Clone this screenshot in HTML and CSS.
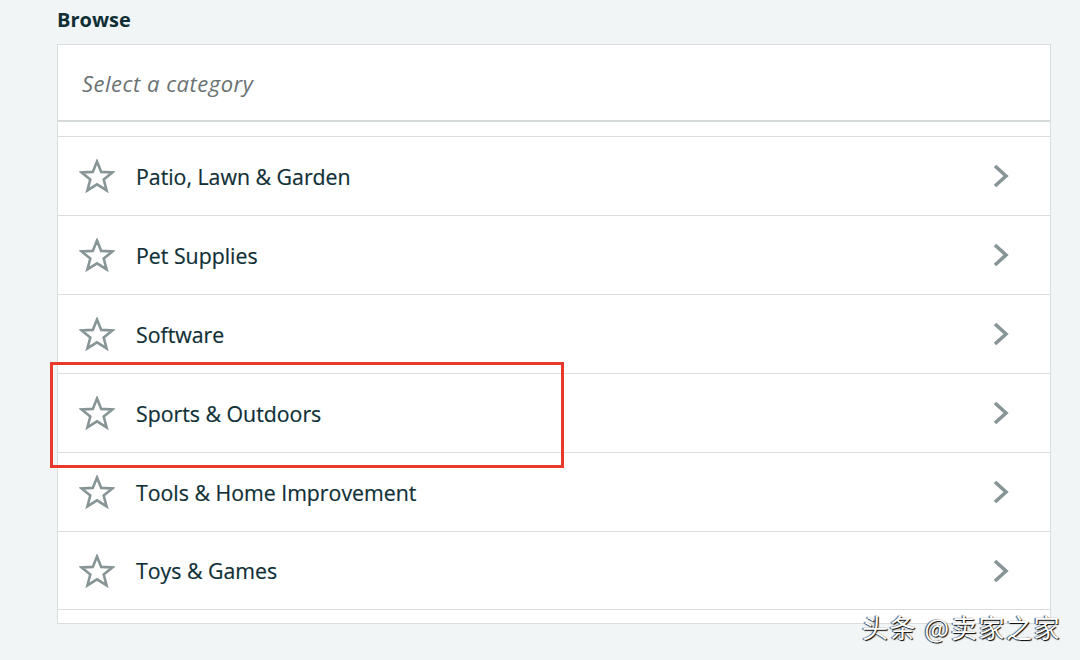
FILE: index.html
```html
<!DOCTYPE html>
<html lang="en">
<head>
  <meta charset="UTF-8">
  <meta name="viewport" content="width=device-width, initial-scale=1.0">
  <title>Browse</title>
  <link rel="stylesheet" href="styles.css">
</head>
<body>
  <div class="browse">
    <h2 class="browse-title">Browse</h2>
    <div class="panel">
      <div class="select-box">Select a category</div>
      <div class="list-gap"></div>

      <!-- category rows -->
      <ul class="category-list">
        <li class="category-item">
          <svg class="star" viewBox="0 0 36 34"><path d="M18 2.5 L22.2 12.9 L33.4 13.5 L24.7 20.6 L27.6 31.4 L18 25.3 L8.4 31.4 L11.3 20.6 L2.6 13.5 L13.8 12.9 Z"/></svg>
          <span class="category-name">Patio, Lawn &amp; Garden</span>
          <svg class="chevron" viewBox="0 0 18 26"><path d="M3 3 L14 13 L3 23"/></svg>
        </li>
        <li class="category-item">
          <svg class="star" viewBox="0 0 36 34"><path d="M18 2.5 L22.2 12.9 L33.4 13.5 L24.7 20.6 L27.6 31.4 L18 25.3 L8.4 31.4 L11.3 20.6 L2.6 13.5 L13.8 12.9 Z"/></svg>
          <span class="category-name">Pet Supplies</span>
          <svg class="chevron" viewBox="0 0 18 26"><path d="M3 3 L14 13 L3 23"/></svg>
        </li>
        <li class="category-item">
          <svg class="star" viewBox="0 0 36 34"><path d="M18 2.5 L22.2 12.9 L33.4 13.5 L24.7 20.6 L27.6 31.4 L18 25.3 L8.4 31.4 L11.3 20.6 L2.6 13.5 L13.8 12.9 Z"/></svg>
          <span class="category-name">Software</span>
          <svg class="chevron" viewBox="0 0 18 26"><path d="M3 3 L14 13 L3 23"/></svg>
        </li>
        <li class="category-item">
          <svg class="star" viewBox="0 0 36 34"><path d="M18 2.5 L22.2 12.9 L33.4 13.5 L24.7 20.6 L27.6 31.4 L18 25.3 L8.4 31.4 L11.3 20.6 L2.6 13.5 L13.8 12.9 Z"/></svg>
          <span class="category-name">Sports &amp; Outdoors</span>
          <svg class="chevron" viewBox="0 0 18 26"><path d="M3 3 L14 13 L3 23"/></svg>
        </li>
        <li class="category-item">
          <svg class="star" viewBox="0 0 36 34"><path d="M18 2.5 L22.2 12.9 L33.4 13.5 L24.7 20.6 L27.6 31.4 L18 25.3 L8.4 31.4 L11.3 20.6 L2.6 13.5 L13.8 12.9 Z"/></svg>
          <span class="category-name">Tools &amp; Home Improvement</span>
          <svg class="chevron" viewBox="0 0 18 26"><path d="M3 3 L14 13 L3 23"/></svg>
        </li>
        <li class="category-item">
          <svg class="star" viewBox="0 0 36 34"><path d="M18 2.5 L22.2 12.9 L33.4 13.5 L24.7 20.6 L27.6 31.4 L18 25.3 L8.4 31.4 L11.3 20.6 L2.6 13.5 L13.8 12.9 Z"/></svg>
          <span class="category-name">Toys &amp; Games</span>
          <svg class="chevron" viewBox="0 0 18 26"><path d="M3 3 L14 13 L3 23"/></svg>
        </li>
      </ul>
      <div class="list-gap bottom"></div>
    </div>
  </div>

  <!-- annotation + watermark -->
  <div class="highlight"></div>
  <div class="watermark">头条 @卖家之家</div>
</body>
</html>
```

FILE: styles.css
```css
body {
  margin: 0;
  font-family: "Open Sans", Arial, sans-serif;
  background-color: #f2f5f5;
  color: #0f2f36;
  position: relative;
  min-height: 660px;
}

.browse {
  margin-left: 57px;
  width: 994px;
  padding-top: 6px;
}

.browse-title {
  margin: 0;
  height: 38px;
  font-size: 20px;
  font-weight: 700;
  line-height: 28px;
  color: #0f2f36;
}

.panel {
  background-color: white;
  border: 1px solid #d9dede;
}

.select-box {
  height: 75px;
  display: flex;
  align-items: center;
  padding-left: 24px;
  font-size: 22px;
  letter-spacing: 0.5px;
  font-style: italic;
  color: #6b7273;
  border-bottom: 2px solid #d6dada;
}

.list-gap {
  height: 14px;
}

.list-gap.bottom {
  height: 13px;
}

.category-list {
  list-style: none;
  margin: 0;
  padding: 0;
}

.category-item {
  height: 78px;
  display: flex;
  align-items: center;
  border-top: 1px solid #d9dede;
}

.category-item:last-child {
  height: 77px;
  border-bottom: 1px solid #d9dede;
}

.star {
  width: 36px;
  height: 34px;
  margin-left: 21px;
  margin-right: 21px;
}

.star path {
  fill: none;
  stroke: #879596;
  stroke-width: 2.6;
  stroke-linejoin: miter;
}

.category-name {
  flex: 1;
  font-size: 21.3px;
  color: #0f2f36;
  -webkit-text-stroke: 0.2px #0f2f36;
}

.chevron {
  width: 18px;
  height: 26px;
  margin-right: 40px;
}

.chevron path {
  fill: none;
  stroke: #879596;
  stroke-width: 3.6;
}

.highlight {
  position: absolute;
  left: 50px;
  top: 362px;
  width: 508px;
  height: 100px;
  border: 3px solid #e8392a;
}

.watermark {
  position: absolute;
  left: 862px;
  top: 608px;
  font-family: "Noto Sans CJK SC", sans-serif;
  font-size: 26px;
  letter-spacing: 1.6px;
  color: white;
  text-shadow: 1px 1px 1px #000, -1px 0 1px #333;
}
```
